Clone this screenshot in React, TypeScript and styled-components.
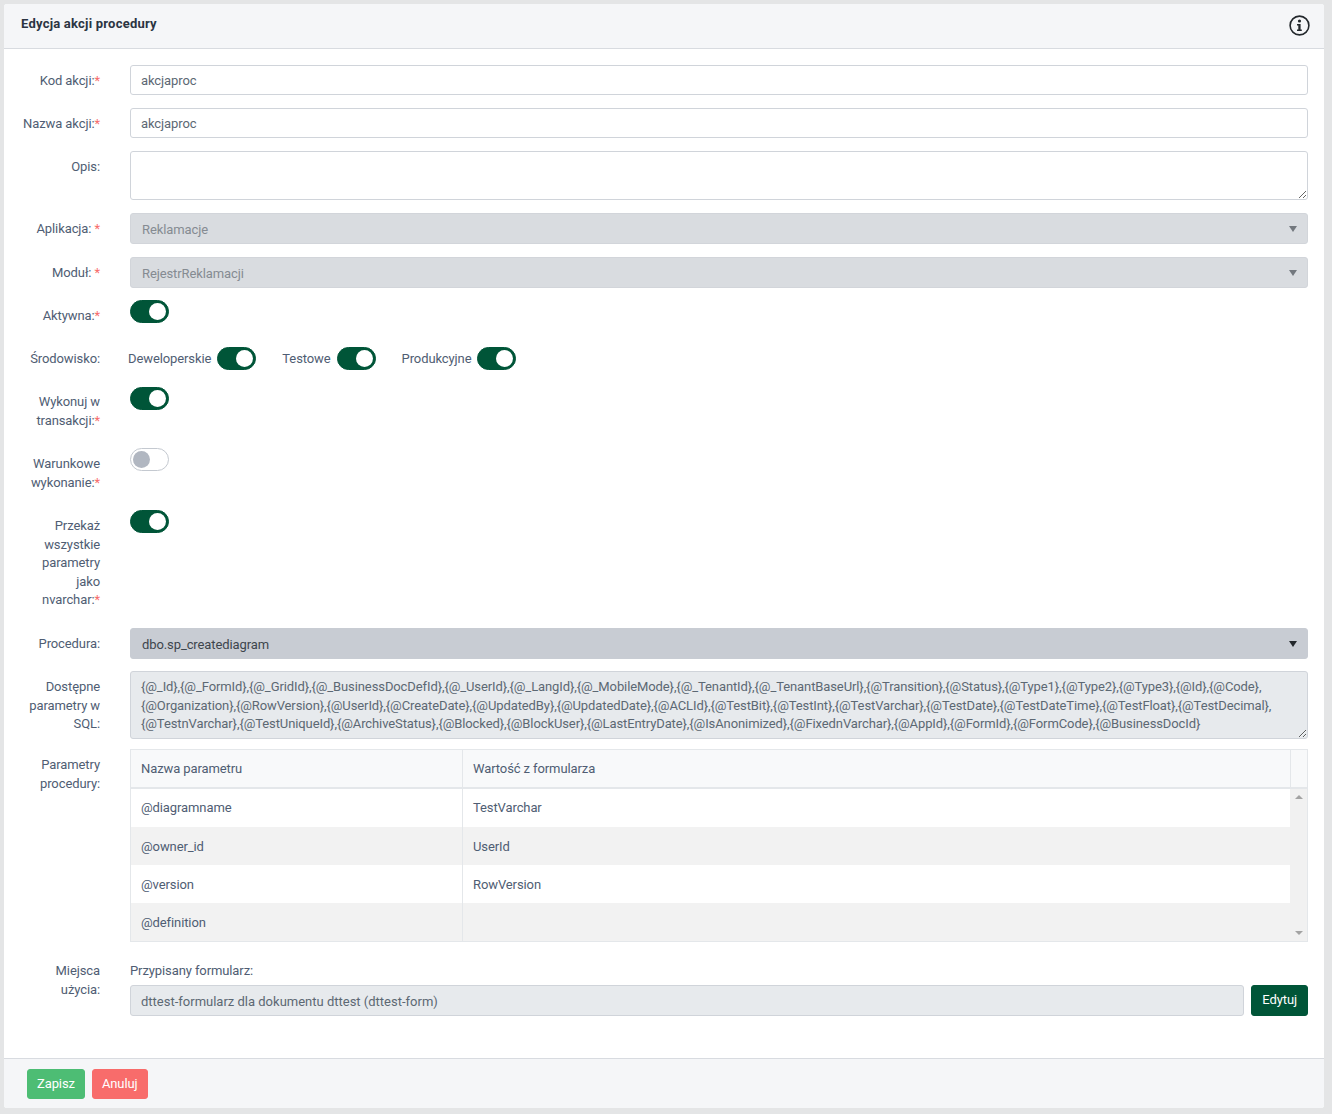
import React from 'react';
import styled, { createGlobalStyle } from 'styled-components';

const GlobalStyle = createGlobalStyle`
  html, body {
    margin: 0;
    padding: 0;
    background: #e4e5e6;
  }

  body {
    color: #4f5d73;
    font-family: Roboto, 'Noto Sans', sans-serif;
    font-size: 13px;
    line-height: 18.5px;
    letter-spacing: -0.1px;
  }

  input, select, textarea, button {
    letter-spacing: inherit;
  }

  * {
    box-sizing: border-box;
  }
`;

const Page = styled.div`
  width: 1332px;
  height: 1114px;
  padding: 4px 8px 6px 4px;
`;

const Card = styled.main`
  display: flex;
  flex-direction: column;
  height: 100%;
  border-radius: 3px;
  background: #fff;
  overflow: hidden;
`;

const CardHeader = styled.header`
  display: flex;
  flex: none;
  justify-content: space-between;
  height: 45px;
  padding: 11px 14px 0 17px;
  border-bottom: 1px solid #d8dbe0;
  background: #f5f6f8;

  h1 {
    margin: 0;
    color: #2b3442;
    font-size: 13px;
    font-weight: 700;
    line-height: 18.5px;
    letter-spacing: 0.22px;
  }
`;

const InfoIcon = styled.svg`
  width: 21px;
  height: 21px;
`;

const Form = styled.form`
  flex: 1;
  padding: 16px 16px 0 16px;
`;

const Row = styled.div<{ $after: number }>`
  display: grid;
  grid-template-columns: 80px minmax(0, 1fr);
  column-gap: 30px;
  margin-bottom: ${({ $after }) => $after}px;
`;

const Label = styled.label<{ $top: number }>`
  padding-top: ${({ $top }) => $top}px;
  text-align: right;
  white-space: nowrap;
  color: #4f5d73;

  b {
    color: #f86c6b;
    font-weight: 400;
  }
`;

const TextInput = styled.input`
  display: block;
  width: 100%;
  height: 30px;
  padding: 0 10px;
  border: 1px solid #d0d4da;
  border-radius: 3px;
  background: #fff;
  color: #5c6873;
  font: inherit;
  outline: none;

  &:disabled {
    background: #e7eaed;
    color: #5c6873;
  }
`;

const TextArea = styled.textarea<{ $height: number; $muted?: boolean }>`
  display: block;
  width: 100%;
  height: ${({ $height }) => $height}px;
  padding: 6px 10px;
  border: 1px solid #d0d4da;
  border-radius: 3px;
  background: ${({ $muted }) => ($muted ? '#e7eaed' : '#fff')};
  color: #5c6873;
  font: inherit;
  white-space: pre;
  overflow: hidden;
  outline: none;
`;

const SelectWrap = styled.div<{ $dark?: boolean }>`
  position: relative;

  &::after {
    content: '';
    position: absolute;
    top: 13px;
    right: 11px;
    border-top: 6px solid ${({ $dark }) => ($dark ? '#23282c' : '#73787e')};
    border-left: 4px solid transparent;
    border-right: 4px solid transparent;
  }
`;

const Select = styled.select<{ $dark?: boolean }>`
  display: block;
  width: 100%;
  height: 31px;
  padding: 4px 11px 0;
  border: 1px solid ${({ $dark }) => ($dark ? '#c8ccd3' : '#d2d5da')};
  border-radius: 3px;
  appearance: none;
  opacity: 1;
  background: ${({ $dark }) => ($dark ? '#c8ccd3' : '#d9dce0')};
  color: ${({ $dark }) => ($dark ? '#3d454d' : '#858b92')};
  font: inherit;
`;

const Toggle = styled.span<{ $on: boolean }>`
  position: relative;
  display: block;
  flex: none;
  width: 39px;
  height: 23px;
  border: 1px solid ${({ $on }) => ($on ? '#005538' : '#c4c9d0')};
  border-radius: 12px;
  background: ${({ $on }) => ($on ? '#005538' : '#fff')};

  &::before {
    content: '';
    position: absolute;
    top: 2px;
    left: ${({ $on }) => ($on ? '18px' : '2px')};
    width: 17px;
    height: 17px;
    border-radius: 50%;
    background: ${({ $on }) => ($on ? '#fff' : '#b1b7c1')};
  }
`;

const EnvList = styled.div`
  display: flex;
  margin-left: -2px;
`;

const EnvItem = styled.div`
  display: flex;
  align-items: center;
  gap: 6px;
  margin-right: 26px;
  color: #4f5d73;
`;

const EnvName = styled.span`
  padding-top: 2px;
`;

const ParamTable = styled.div`
  border: 1px solid #e4e7ea;
`;

const TableHead = styled.div`
  display: grid;
  grid-template-columns: 332px 828px 1fr;
  height: 39px;
  border-bottom: 2px solid #e4e7ea;
  background: #f8f9fa;
`;

const HeadCell = styled.div`
  padding: 10px 10px 0;
  border-right: 1px solid #e4e7ea;
  color: #4f5d73;

  &:last-child {
    border-right: 0;
  }
`;

const TableScroll = styled.div`
  display: grid;
  grid-template-columns: 1159px 1fr;
`;

const Cell = styled.div`
  padding: 10px 10px 0;
  border-right: 1px solid #e4e7ea;
  color: #4f5d73;

  &:last-child {
    border-right: 0;
  }
`;

const TableRow = styled.div<{ $odd: boolean }>`
  display: grid;
  grid-template-columns: 332px 1fr;
  height: 38px;
  background: ${({ $odd }) => ($odd ? '#f2f2f2' : '#fff')};

  &:not(:first-child) ${Cell} {
    padding-top: 11px;
  }
`;

const Scrollbar = styled.div`
  display: flex;
  flex-direction: column;
  justify-content: space-between;
  align-items: center;
  padding: 6px 0;
  background: #f1f1f1;
`;

const ScrollArrow = styled.span<{ $up?: boolean }>`
  border-left: 4px solid transparent;
  border-right: 4px solid transparent;
  ${({ $up }) => ($up ? 'border-bottom: 4px solid #a3a3a3;' : 'border-top: 4px solid #a3a3a3;')}
`;

const UsageCaption = styled.div`
  margin-bottom: 4.5px;
  padding-top: 1px;
  color: #4f5d73;
`;

const UsageControl = styled.div`
  display: flex;
  gap: 7px;

  input {
    height: 31px;
    padding-top: 1px;
    letter-spacing: 0;
  }
`;

const Button = styled.button<{ $bg: string }>`
  height: 30px;
  padding: 0 9px;
  border: 1px solid ${({ $bg }) => $bg};
  border-radius: 3px;
  background: ${({ $bg }) => $bg};
  color: #fff;
  font: inherit;
`;

const EditButton = styled(Button)`
  flex: none;
  height: 31px;
  padding: 0 10px;
`;

const CardFooter = styled.footer`
  display: flex;
  flex: none;
  gap: 7px;
  height: 50px;
  padding: 10px 23px 0;
  border-top: 1px solid #d8dbe0;
  background: #f5f6f8;
`;

const paramsText = [
  '{@_Id},{@_FormId},{@_GridId},{@_BusinessDocDefId},{@_UserId},{@_LangId},{@_MobileMode},{@_TenantId},{@_TenantBaseUrl},{@Transition},{@Status},{@Type1},{@Type2},{@Type3},{@Id},{@Code},',
  '{@Organization},{@RowVersion},{@UserId},{@CreateDate},{@UpdatedBy},{@UpdatedDate},{@ACLId},{@TestBit},{@TestInt},{@TestVarchar},{@TestDate},{@TestDateTime},{@TestFloat},{@TestDecimal},',
  '{@TestnVarchar},{@TestUniqueId},{@ArchiveStatus},{@Blocked},{@BlockUser},{@LastEntryDate},{@IsAnonimized},{@FixednVarchar},{@AppId},{@FormId},{@FormCode},{@BusinessDocId}',
].join('\n');

const envs = ['Deweloperskie', 'Testowe', 'Produkcyjne'];

const params = [
  { name: '@diagramname', value: 'TestVarchar' },
  { name: '@owner_id', value: 'UserId' },
  { name: '@version', value: 'RowVersion' },
  { name: '@definition', value: '' },
];

const Req = () => <b>*</b>;

const App: React.FC = () => {
  return (
    <Page>
      <GlobalStyle />
      <Card>
        <CardHeader>
          <h1>Edycja akcji procedury</h1>
          <InfoIcon viewBox="0 0 21 21" fill="none">
            <circle cx="10.5" cy="10.5" r="9.4" stroke="#23282c" strokeWidth="1.6" />
            <circle cx="10.5" cy="6" r="1.6" fill="#23282c" />
            <path d="M8 9h3.6v5.6h1.2v1.4H8v-1.4h1.3V10.4H8z" fill="#23282c" />
          </InfoIcon>
        </CardHeader>

        <Form>
          <Row $after={13}>
            <Label $top={7}>Kod akcji:<Req /></Label>
            <TextInput defaultValue="akcjaproc" />
          </Row>
          <Row $after={13}>
            <Label $top={7}>Nazwa akcji:<Req /></Label>
            <TextInput defaultValue="akcjaproc" />
          </Row>
          <Row $after={13}>
            <Label $top={7}>Opis:</Label>
            <TextArea $height={49} />
          </Row>
          <Row $after={13}>
            <Label $top={7}>Aplikacja: <Req /></Label>
            <SelectWrap>
              <Select disabled><option>Reklamacje</option></Select>
            </SelectWrap>
          </Row>
          <Row $after={12}>
            <Label $top={7}>Moduł: <Req /></Label>
            <SelectWrap>
              <Select disabled><option>RejestrReklamacji</option></Select>
            </SelectWrap>
          </Row>
          <Row $after={21.5}>
            <Label $top={7}>Aktywna:<Req /></Label>
            <div><Toggle $on /></div>
          </Row>
          <Row $after={17}>
            <Label $top={3}>Środowisko:</Label>
            <EnvList>
              {envs.map(env => (
                <EnvItem key={env}>
                  <EnvName>{env}</EnvName>
                  <Toggle $on />
                </EnvItem>
              ))}
            </EnvList>
          </Row>
          <Row $after={18}>
            <Label $top={6}>Wykonuj w<br />transakcji:<Req /></Label>
            <div><Toggle $on /></div>
          </Row>
          <Row $after={18}>
            <Label $top={7}>Warunkowe<br />wykonanie:<Req /></Label>
            <div><Toggle $on={false} /></div>
          </Row>
          <Row $after={18.5}>
            <Label $top={7}>Przekaż<br />wszystkie<br />parametry<br />jako<br />nvarchar:<Req /></Label>
            <div><Toggle $on /></div>
          </Row>
          <Row $after={12}>
            <Label $top={7}>Procedura:</Label>
            <SelectWrap $dark>
              <Select $dark><option>dbo.sp_creatediagram</option></Select>
            </SelectWrap>
          </Row>
          <Row $after={10}>
            <Label $top={7}>Dostępne<br />parametry w<br />SQL:</Label>
            <TextArea $height={68} $muted readOnly value={paramsText} />
          </Row>
          <Row $after={19}>
            <Label $top={7}>Parametry<br />procedury:</Label>
            <ParamTable>
              <TableHead>
                <HeadCell>Nazwa parametru</HeadCell>
                <HeadCell>Wartość z formularza</HeadCell>
                <HeadCell />
              </TableHead>
              <TableScroll>
                <div>
                  {params.map((param, i) => (
                    <TableRow key={param.name} $odd={i % 2 === 1}>
                      <Cell>{param.name}</Cell>
                      <Cell>{param.value}</Cell>
                    </TableRow>
                  ))}
                </div>
                <Scrollbar>
                  <ScrollArrow $up />
                  <ScrollArrow />
                </Scrollbar>
              </TableScroll>
            </ParamTable>
          </Row>
          <Row $after={0}>
            <Label $top={1}>Miejsca<br />użycia:</Label>
            <div>
              <UsageCaption>Przypisany formularz:</UsageCaption>
              <UsageControl>
                <TextInput disabled defaultValue="dttest-formularz dla dokumentu dttest (dttest-form)" />
                <EditButton type="button" $bg="#005538">Edytuj</EditButton>
              </UsageControl>
            </div>
          </Row>
        </Form>

        <CardFooter>
          <Button type="button" $bg="#4dbd74">Zapisz</Button>
          <Button type="button" $bg="#f86c6b">Anuluj</Button>
        </CardFooter>
      </Card>
    </Page>
  );
};

export default App;
